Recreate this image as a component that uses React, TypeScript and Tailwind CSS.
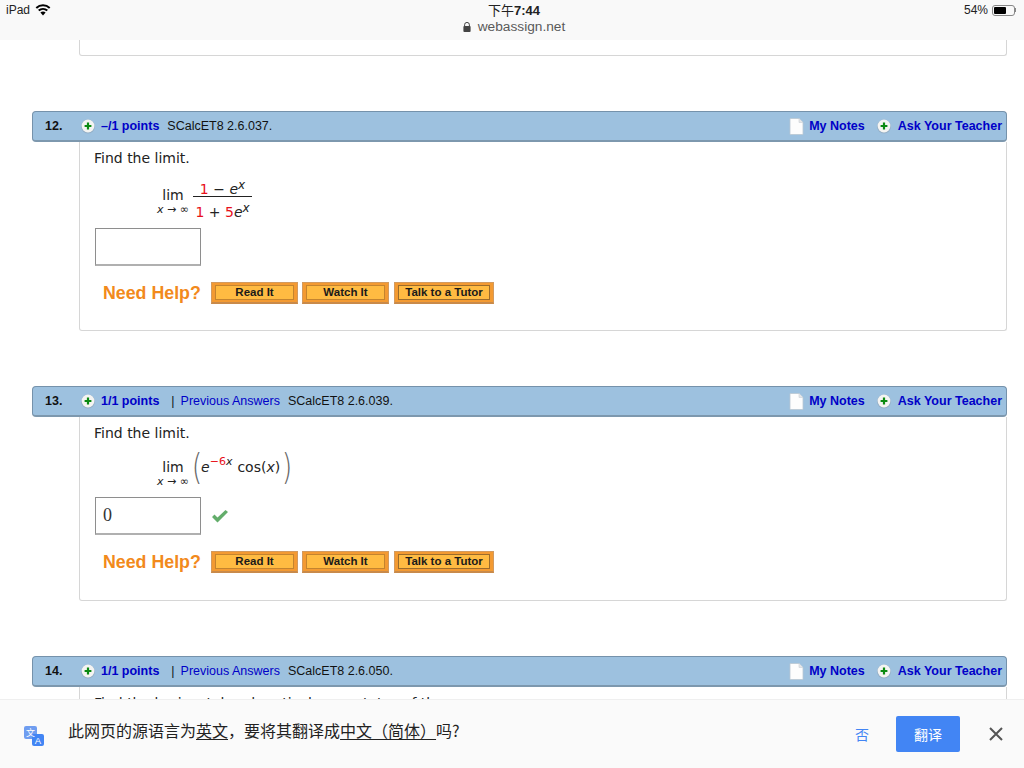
import React from "react";

const arial = "font-['Liberation_Sans',Arial,sans-serif]";
const dejavu = "font-['DejaVu_Sans',Verdana,sans-serif]";

function PlusIcon() {
  return (
    <svg width="16" height="16" viewBox="0 0 16 16" className="shrink-0">
      <circle cx="8" cy="8.6" r="7" fill="#8a9aa8" opacity="0.45" />
      <circle cx="8" cy="8" r="6.4" fill="#f4f4f2" />
      <path d="M8 4.6v6.8M4.6 8h6.8" stroke="#0b8a12" strokeWidth="2.2" />
    </svg>
  );
}

function NoteIcon() {
  return (
    <svg width="15" height="17" viewBox="0 0 15 17" className="shrink-0">
      <path d="M1 .5h9l4 4v12H1z" fill="#fdfdfd" stroke="#b9c6d2" strokeWidth="0.8" />
      <path d="M10 .5v4h4" fill="#e6e6e6" stroke="#c9d0d6" strokeWidth="0.6" />
    </svg>
  );
}

function HeaderBar({ n, points, prev, code }: { n: string; points: string; prev?: boolean; code: string }) {
  return (
    <div className={`${arial} ml-8 w-[975px] h-[31px] shrink-0 flex items-center rounded-[4px] bg-[#9dc1df] border border-[#7592ab] border-b-2 border-b-[#7d98ae] text-[12.5px] text-[#111]`}>
      <span className="ml-[12px] w-[35px] font-bold">{n}</span>
      <PlusIcon />
      <span className="ml-[5px] font-bold text-[#0000c8]">{points}</span>
      {prev ? (
        <>
          <span className="ml-[12px]">|</span>
          <span className="ml-[6px] text-[#0000c8]">Previous Answers</span>
        </>
      ) : null}
      <span className="ml-[8px]">{code}</span>
      <div className="ml-auto flex items-center">
        <NoteIcon />
        <span className="ml-[5px] font-bold text-[#0000c8]">My Notes</span>
        <span className="ml-[11px]"><PlusIcon /></span>
        <span className="ml-[6px] mr-1 font-bold text-[#0000c8]">Ask Your Teacher</span>
      </div>
    </div>
  );
}

function HelpBtn({ label, w, dark }: { label: string; w: string; dark?: boolean }) {
  return (
    <div className={`${w} h-[22px] bg-[#f39a32] border border-[#d39a5e] border-b-2 border-b-[#c98a4a] px-[3px] py-[2px] flex`}>
      <div className={`flex-1 flex items-center justify-center pt-[1px] bg-[#ffbb42] border ${dark ? "border-[#9c6c2c]" : "border-[#c4842f]"} text-[11.5px] font-bold text-[#1a1a1a]`}>
        {label}
      </div>
    </div>
  );
}

function NeedHelp() {
  return (
    <div className={`${arial} flex items-center ml-[1px]`}>
      <span className="ml-[8px] w-[108px] text-[17.8px] font-bold text-[#f28a1c] leading-[22px]">Need Help?</span>
      <HelpBtn label="Read It" w="w-[87px]" />
      <span className="w-[4px]" />
      <HelpBtn label="Watch It" w="w-[87px]" />
      <span className="w-[5px]" />
      <HelpBtn label="Talk to a Tutor" w="w-[100px]" dark />
    </div>
  );
}

function Lim() {
  return (
    <div className={`${dejavu} flex flex-col items-center w-[38px] text-[#222]`}>
      <span className="text-[14px] leading-[17px]">lim</span>
      <span className="text-[11px] leading-[12px] whitespace-nowrap"><i>x</i> → ∞</span>
    </div>
  );
}

function Body({ children, h }: { children: React.ReactNode; h: string }) {
  return (
    <div className={`ml-[79px] w-[928px] ${h} shrink-0 bg-white border-x border-b border-[#d6d6d6] rounded-b-[3px] pl-[14px] ${dejavu} text-[14px] text-[#222]`}>
      {children}
    </div>
  );
}

export default function App() {
  return (
    <div className="relative w-[1024px] h-[768px] overflow-hidden bg-white flex flex-col">
      {/* Status and address bar */}
      <div className={`${arial} relative h-[40px] shrink-0 bg-[#f9f9f9] text-[#222]`}>
        <div className="flex items-center h-[20px] px-[6px] text-[12px]">
          <span>iPad</span>
          <svg width="16" height="12" viewBox="0 0 16 12" className="ml-[5px]">
            <path d="M8 11.5 L5.4 8.6a3.8 3.8 0 0 1 5.2 0z" fill="#000" />
            <path d="M3.7 6.6a6.4 6.4 0 0 1 8.6 0" stroke="#000" strokeWidth="2" fill="none" />
            <path d="M1.3 3.9a9.8 9.8 0 0 1 13.4 0" stroke="#000" strokeWidth="2" fill="none" />
          </svg>
          <span className="ml-auto">54%</span>
          <div className="ml-[4px] w-[23px] h-[11px] border border-[#888] rounded-[3px] p-[1px]">
            <div className="w-[12px] h-full bg-black rounded-[1px]" />
          </div>
          <span className="w-[1px] h-[4px] bg-[#888] mr-[2px]" />
        </div>
        <div className="absolute left-0 right-0 top-[2px] flex flex-col items-center">
          <span className="ml-[4px] text-[13px] leading-[17px] font-['Liberation_Sans','Noto_Sans_CJK_SC',sans-serif]">下午<b>7:44</b></span>
          <div className="ml-[4px] flex items-center gap-[7px] text-[13.7px] leading-[18px] mt-[-1px] text-[#5a5a5a]">
            <svg width="8" height="10" viewBox="0 0 8 10">
              <path d="M1.6 4V2.8a2.4 2.4 0 0 1 4.8 0V4" stroke="#444" strokeWidth="1" fill="none" />
              <rect x="0.4" y="4" width="7.2" height="6" rx="1" fill="#444" />
            </svg>
            <span>webassign.net</span>
          </div>
        </div>
      </div>

      {/* Scrolled page */}
      <div className="ml-[79px] w-[928px] h-[16px] shrink-0 border-x border-b border-[#d6d6d6] rounded-b-[3px]" />
      <div className="h-[55px] shrink-0" />

      <HeaderBar n="12." points="–/1 points" code="SCalcET8 2.6.037." />
      <Body h="h-[189px]">
        <p className="pt-[8px] leading-[16px]">Find the limit.</p>
        <div className="flex items-center ml-[60px] mt-[12px] h-[44px]">
          <div className="mt-[2px]"><Lim /></div>
          <div className="ml-[1px] flex flex-col items-center w-[59px] text-[14px] leading-[18px]">
            <div className="w-full text-center border-b border-[#222] h-[17px]">
              <span className="text-[#e8101a]">1</span> − <i>e</i><sup className="text-[12px] italic top-[-5px]">x</sup>
            </div>
            <div className="whitespace-nowrap mt-[6px]">
              <span className="text-[#e8101a]">1</span> + <span className="text-[#e8101a]">5</span><i>e</i><sup className="text-[12px] italic top-[-5px]">x</sup>
            </div>
          </div>
        </div>
        <div className="ml-[1px] mt-[6px] w-[106px] h-[38px] border border-[#8e8e8e] border-b-2 border-b-[#b0b0b0]" />
        <div className="mt-[16px]"><NeedHelp /></div>
      </Body>
      <div className="h-[55px] shrink-0" />

      <HeaderBar n="13." points="1/1 points" prev code="SCalcET8 2.6.039." />
      <Body h="h-[184px]">
        <p className="pt-[8px] leading-[16px]">Find the limit.</p>
        <div className="flex items-center ml-[60px] mt-[10px] h-[38px]">
          <div className="mt-[6px]"><Lim /></div>
          <div className="ml-[-2px] mb-[6px] flex items-center text-[14px]">
            <span className="font-light text-[#666] text-[36px] leading-[34px] scale-x-75">(</span>
            <i className="ml-[-3px]">e</i>
            <sup className="text-[11px] top-[-5px]"><span className="text-[#e8101a]">−6</span><i>x</i></sup>
            <span className="ml-[5px]">cos(<i>x</i>)</span>
            <span className="font-light text-[#666] text-[36px] leading-[34px] scale-x-75">)</span>
          </div>
        </div>
        <div className="ml-[1px] mt-[8px] flex items-center">
          <div className="w-[106px] h-[38px] border border-[#8e8e8e] border-b-2 border-b-[#b0b0b0] pl-[7px] flex items-center font-['Liberation_Serif',serif] text-[18px] text-[#333]">0</div>
          <svg width="18" height="15" viewBox="0 0 18 15" className="ml-[10px] mt-[1px]">
            <path d="M1 8l2.5-2.5 3 3L14.5 1 17 3 6.5 13.5z" fill="#63ad6b" />
          </svg>
        </div>
        <div className="mt-[16px]"><NeedHelp /></div>
      </Body>
      <div className="h-[55px] shrink-0" />

      <HeaderBar n="14." points="1/1 points" prev code="SCalcET8 2.6.050." />
      <Body h="h-[100px]">
        <p className="pt-[8px] leading-[16px] whitespace-nowrap">Find the horizontal and vertical asymptotes of the</p>
      </Body>

      {/* Translate prompt */}
      <div className="absolute left-0 right-0 bottom-0 h-[69px] bg-[#fafafa] border-t border-[#efefef] flex items-center font-['Noto_Sans_CJK_SC',sans-serif] text-[16px] text-[#222]">
        <svg width="22" height="22" viewBox="0 0 22 22" className="ml-[23px] mt-[3px] shrink-0">
          <rect x="1" y="1" width="13" height="13" rx="2" fill="#6f9df0" />
          <rect x="9" y="9" width="12" height="12" rx="2" fill="#4285f4" />
          <text x="7.5" y="11" textAnchor="middle" fontSize="9" fill="#fff" fontFamily="Noto Sans CJK SC">文</text>
          <text x="15" y="19" textAnchor="middle" fontSize="9.5" fill="#fff" fontFamily="Liberation Sans">A</text>
        </svg>
        <p className="ml-[23px] mb-[9px] whitespace-nowrap">
          此网页的源语言为<u className="underline-offset-2">英文</u>，要将其翻译成<u className="underline-offset-2">中文（简体）</u>吗?
        </p>
        <span className="ml-auto text-[14px] text-[#4285f4]">否</span>
        <div className="ml-[27px] w-[64px] h-[36px] rounded-[2px] bg-[#4285f4] text-white text-[14px] flex items-center justify-center">翻译</div>
        <svg width="14" height="14" viewBox="0 0 14 14" className="ml-[29px] mr-[21px]">
          <path d="M1 1l12 12M13 1L1 13" stroke="#555" strokeWidth="2" />
        </svg>
      </div>
    </div>
  );
}
